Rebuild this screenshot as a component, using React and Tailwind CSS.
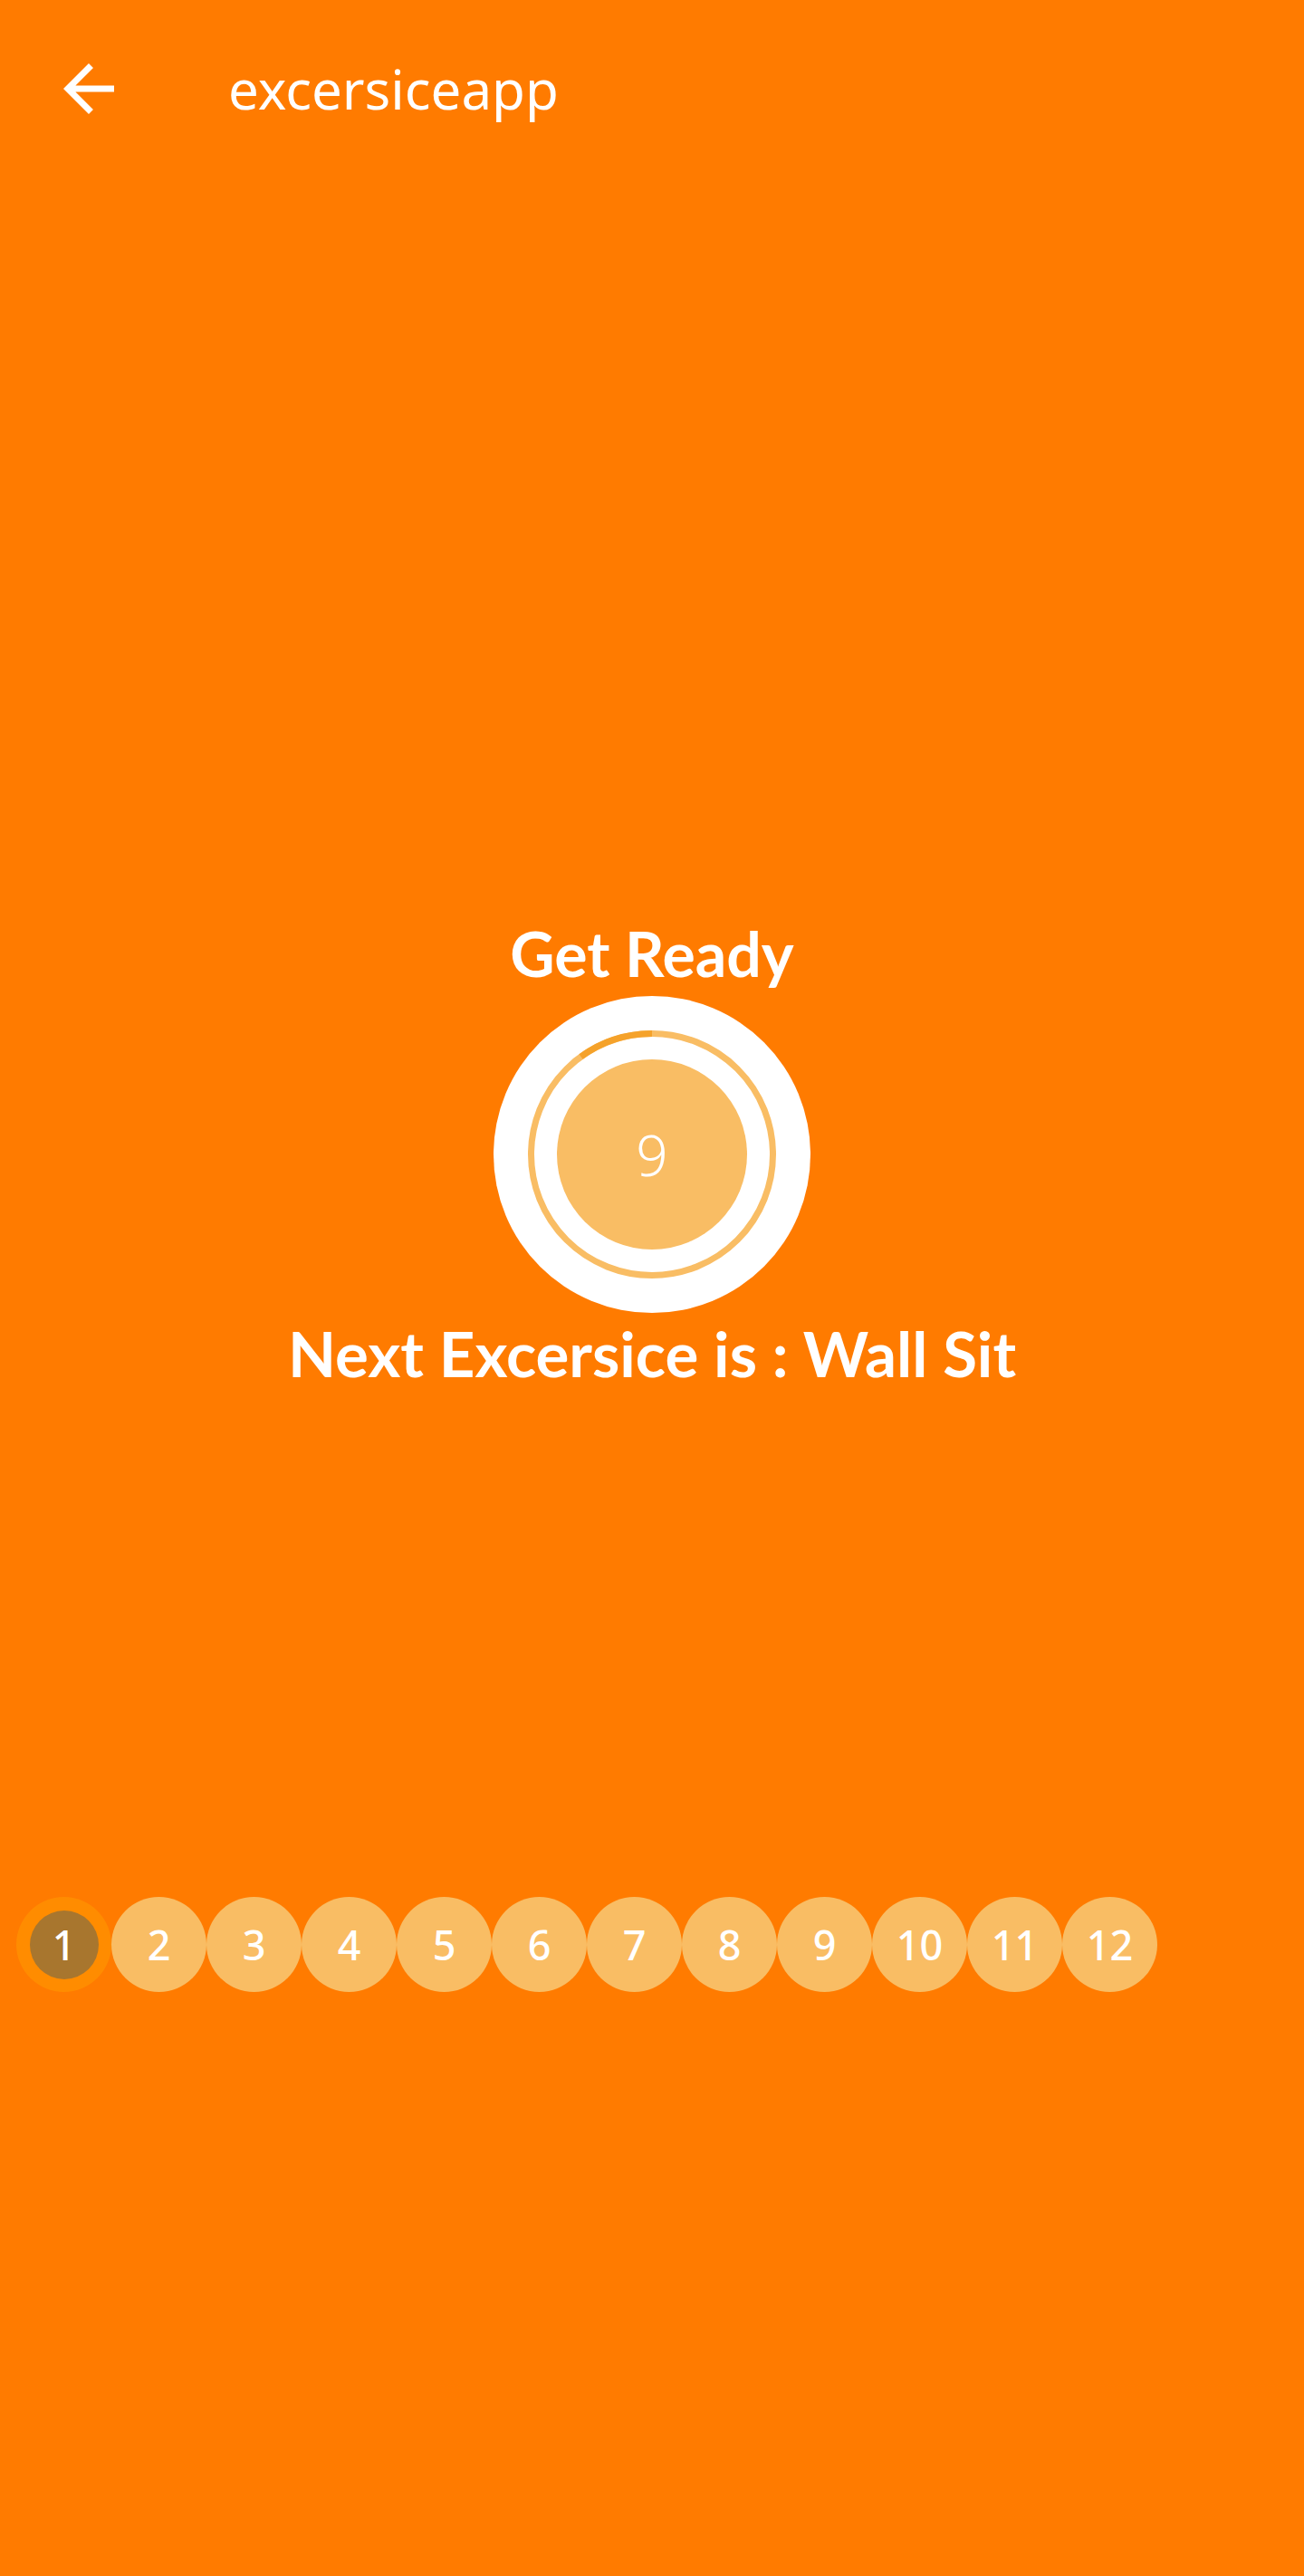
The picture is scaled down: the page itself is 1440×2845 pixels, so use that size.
import React from "react";

const steps = [1, 2, 3, 4, 5, 6, 7, 8, 9, 10, 11, 12];

const ProgressRing = ({ total = 10, left = 9 }) => {
  const r = 133.5;
  const c = 2 * Math.PI * r;
  const done = ((total - left) / total) * c;
  return (
    <svg width="274" height="274" viewBox="0 0 274 274" className="absolute inset-0 m-auto">
      <circle cx="137" cy="137" r={r} fill="none" stroke="#f9bd64" strokeWidth="7" />
      <circle
        cx="137"
        cy="137"
        r={r}
        fill="none"
        stroke="#f5a22a"
        strokeWidth="7"
        strokeDasharray={`${done} ${c}`}
        transform="rotate(-90 137 137) scale(1 -1) translate(0 -274)"
      />
    </svg>
  );
};

export default function App() {
  return (
    <div
      className="w-full h-[2845px] bg-[#ff7b00] text-white flex flex-col"
      style={{ fontFamily: '"Noto Sans", "Open Sans", sans-serif' }}
    >
      {/* toolbar */}
      <div className="h-[196px] flex items-center pl-[56px]">
        <svg width="84" height="84" viewBox="0 0 24 24" fill="white">
          <path d="M20 11H7.83l5.59-5.59L12 4l-8 8 8 8 1.41-1.41L7.83 13H20v-2z" />
        </svg>
        <span className="ml-[112px] text-[60px] leading-[60px]">excersiceapp</span>
      </div>

      {/* timer */}
      <div className="flex flex-col items-center mt-[817px] font-[Lato,sans-serif]">
        <h2 className="text-[68px] leading-[80px] font-bold">Get Ready</h2>
        <div className="relative mt-[7px] w-[350px] h-[350px] rounded-full bg-white flex items-center justify-center">
          <ProgressRing />
          <div className="relative w-[210px] h-[210px] rounded-full bg-[#f9bd64] flex items-center justify-center">
            <span className="text-[62px] leading-none font-light font-['Noto_Sans',sans-serif]">9</span>
          </div>
        </div>
        <p className="mt-[5px] text-[69px] leading-[80px] font-bold">Next Excersice is : Wall Sit</p>
      </div>

      {/* exercise status */}
      <div className="flex pl-[18px] mt-[560px] font-medium">
        {steps.map((n) =>
          n === 1 ? (
            <div key={n} className="w-[105px] h-[105px] rounded-full bg-[#ff8c00] flex items-center justify-center">
              <div className="w-[76px] h-[76px] rounded-full bg-[#a8762e] flex items-center justify-center text-[45px]">
                {n}
              </div>
            </div>
          ) : (
            <div
              key={n}
              className="w-[105px] h-[105px] rounded-full bg-[#f9bd64] flex items-center justify-center text-[45px]"
            >
              {n}
            </div>
          )
        )}
      </div>
    </div>
  );
}
